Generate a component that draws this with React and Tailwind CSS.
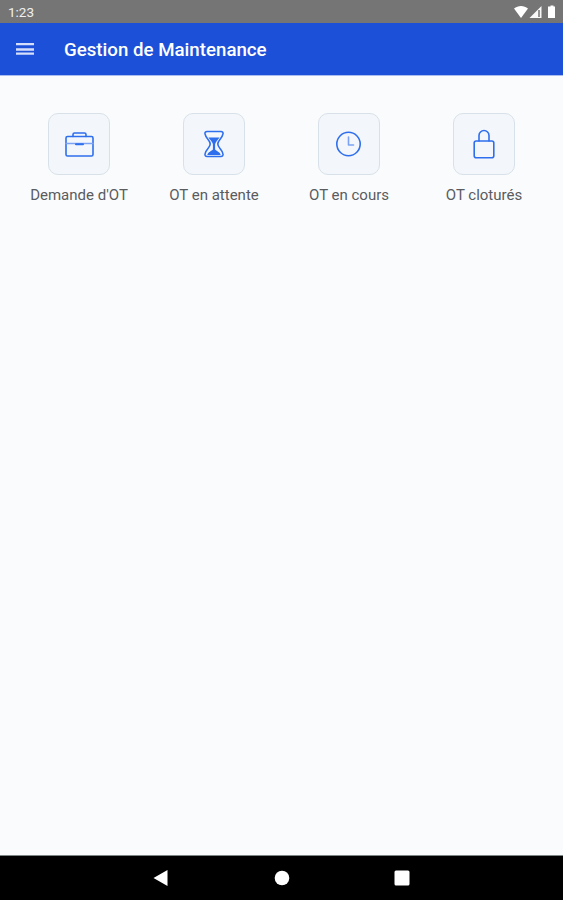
const iconProps = {
  className: "h-8 w-8",
  viewBox: "0 0 32 32",
  fill: "none",
  stroke: "#2f6fed",
  strokeWidth: 1.6,
  strokeLinecap: "round",
  strokeLinejoin: "round",
};

function BriefcaseIcon() {
  return (
    <svg {...iconProps}>
      <rect x="3" y="8.5" width="27" height="19.5" rx="1.5" />
      <path d="M10 8.500V6.500a1.500 1.500 0 0 1 1.500-1.500h10a1.500 1.500 0 0 1 1.500 1.500v2" />
      <path d="M3 15.5h27" stroke="#7ba2f4" />
      <path d="M13 16.3h7" strokeWidth="2" />
    </svg>
  );
}

function HourglassIcon() {
  return (
    <svg {...iconProps}>
      <path d="M9 3.500h14c1.600 0 2.300 1 2 2.400-.8 4.600-5.200 6.400-5.200 10.100s4.400 5 5.200 10c.3 1.500-.6 2.500-2 2.500H9c-1.400 0-2.300-1-2-2.500.8-5 5.200-6.300 5.200-10S7.800 10.500 7 5.900c-.3-1.400.4-2.400 2-2.400z" />
      <path
        d="M10.500 9.500h11c-1.500 2.300-3.800 4.300-4.400 6.500v5.500c1 1.500 5 2.500 5.600 5.500h-13.400c.6-3 4.600-4 5.600-5.500V16c-.6-2.200-2.900-4.200-4.400-6.500z"
        fill="#2f6fed"
        stroke="none"
      />
    </svg>
  );
}

function ClockIcon() {
  return (
    <svg {...iconProps}>
      <circle cx="15.500" cy="16" r="11.700" />
      <path d="M15.500 9v8h5" stroke="#7ba2f4" />
    </svg>
  );
}

function LockIcon() {
  return (
    <svg {...iconProps}>
      <path d="M11 13V7.500a5 5 0 0 1 10 0V13" />
      <rect x="6.200" y="13" width="19.600" height="16.800" rx="2" />
    </svg>
  );
}

const menuItems = [
  { label: "Demande d'OT", Icon: BriefcaseIcon },
  { label: "OT en attente", Icon: HourglassIcon },
  { label: "OT en cours", Icon: ClockIcon },
  { label: "OT cloturés", Icon: LockIcon },
];

export default function App() {
  return (
    <div className="flex h-screen flex-col overflow-hidden bg-[#f9fbfd] font-['Roboto',sans-serif]">
      {/* Status bar */}
      <div className="flex h-[23px] shrink-0 items-center justify-between bg-[#757575] pl-2 pr-1.5 text-[#f0f0f0]">
        <span className="pt-0.5 text-[13.5px] leading-none">1:23</span>
        <svg className="h-[23px] w-[44px]" viewBox="0 0 44 23" fill="white">
          <path d="M1 8.500C5 5 11 5 15 8.500L8 18z" />
          <path d="M28.500 6v12H16.500z" opacity="0.95" />
          <path d="M26 10v7" stroke="#757575" strokeWidth="1.500" />
          <path d="M36 6.500h1.500V5.500h3v1H42V18h-7V6.500z" />
        </svg>
      </div>

      {/* Header */}
      <header className="flex h-[52px] shrink-0 items-center bg-[#1d50d8] pl-4 text-white">
        <svg className="h-4 w-[18px]" viewBox="0 0 18 16" stroke="#d5defa" strokeWidth="2.300">
          <path d="M0 3.200h18M0 8.500h18M0 12.700h18" />
        </svg>
        <h1 className="ml-[30px] pt-[3px] text-[18.7px] font-medium">Gestion de Maintenance</h1>
      </header>

      {/* Menu */}
      <main className="grid flex-1 grid-cols-4 content-start border-t border-[#a9bdf0] px-[11.5px] pt-[37px]">
        {menuItems.map(({ label, Icon }) => (
          <button key={label} type="button" className="flex flex-col items-center">
            <span className="flex size-[62px] items-center justify-center rounded-[10px] border border-[#d8e1e9] bg-[#f3f7fb]">
              <Icon />
            </span>
            <span className="mt-2.5 whitespace-nowrap text-[15px] leading-5 text-[#5a5c60]">
              {label}
            </span>
          </button>
        ))}
      </main>

      {/* Navigation bar */}
      <nav className="flex h-[45px] shrink-0 items-center justify-center border-t border-[#7d8583] bg-black">
        <svg className="h-[44px] w-[260px]" viewBox="0 0 260 44" fill="white">
          <path d="M1.500 22L15.500 14v16z" />
          <circle cx="130" cy="22" r="7.300" />
          <rect x="242.500" y="14.500" width="15" height="15" rx="1.500" />
        </svg>
      </nav>
    </div>
  );
}
